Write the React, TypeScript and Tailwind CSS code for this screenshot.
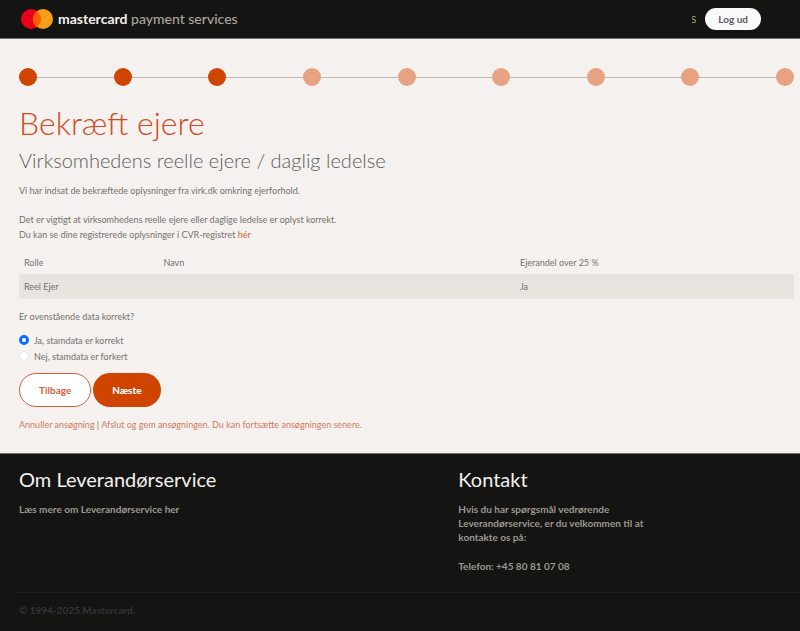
import React, { useState } from 'react';

const steps = [true, true, true, false, false, false, false, false, false];

const owners = [{ role: 'Reel Ejer', name: '', share: 'Ja' }];

const answers = [
  { value: 'yes', label: 'Ja, stamdata er korrekt' },
  { value: 'no', label: 'Nej, stamdata er forkert' },
];

const Logo = () => (
  <svg className="h-5 w-8" viewBox="0 0 32 20" aria-hidden="true">
    <circle cx="10" cy="10" r="10" fill="#eb001b" />
    <circle cx="22" cy="10" r="10" fill="#f79e1b" />
    <path d="M16 2a10 10 0 0 1 0 16a10 10 0 0 1 0-16z" fill="#ff5f00" />
  </svg>
);

const Header = () => (
  <header className="flex h-[39px] items-center justify-between border-b border-[#73726f] bg-[#141413] pl-[21px] pr-[39px]">
    <div className="flex items-center gap-[5px]">
      <Logo />
      <span className="text-[14px] leading-5 font-medium text-[#aaa69d]">
        <span className="font-bold text-[#f3f0ec]">mastercard</span> payment services
      </span>
    </div>
    <div className="flex items-center gap-[9px]">
      <span className="flex w-1 justify-end overflow-hidden text-[10px] text-[#aaa69d]">S</span>
      <button className="h-[22px] rounded-full bg-[#f8f9fa] px-[13px] text-[10px] font-bold text-[#5c5c60]">
        Log ud
      </button>
    </div>
  </header>
);

const Stepper = () => (
  <ol className="flex items-center">
    {steps.map((done, i) => (
      <li key={i} className={i === 0 ? 'flex items-center' : 'flex flex-1 items-center'}>
        {i > 0 && <span className="h-px flex-1 bg-[#bcb8b5]" />}
        <span className={`size-[18px] rounded-full ${done ? 'bg-[#cf4500]' : 'bg-[#e7a281]'}`} />
      </li>
    ))}
  </ol>
);

const OwnersTable = () => (
  <table className="mt-2 w-full table-fixed text-left">
    <thead>
      <tr className="h-6">
        <th className="w-[18%] px-[5px] font-normal">Rolle</th>
        <th className="w-[46%] px-[5px] font-normal">Navn</th>
        <th className="px-[5px] font-normal">Ejerandel over 25 %</th>
      </tr>
    </thead>
    <tbody>
      {owners.map((owner) => (
        <tr key={owner.role} className="h-[25px] bg-[#e8e5e1]">
          <td className="px-[5px]">{owner.role}</td>
          <td className="px-[5px]">{owner.name}</td>
          <td className="px-[5px]">{owner.share}</td>
        </tr>
      ))}
    </tbody>
  </table>
);

const Footer = () => (
  <footer className="flex-1 border-t border-[#73726f] bg-[#141413] pl-3 text-[10px] leading-[14px] font-bold text-[#9c9890]">
    <div className="grid grid-cols-[9fr_7fr] pt-[11px] pb-[19px] pl-[7px]">
      <section>
        <h3 className="text-[20px] leading-7 font-normal text-[#f3f0ee]">Om Leverandørservice</h3>
        <a href="#om" className="mt-[9px] block">Læs mere om Leverandørservice her</a>
      </section>
      <section>
        <h3 className="text-[20px] leading-7 font-normal text-[#f3f0ee]">Kontakt</h3>
        <p className="mt-[9px] max-w-[210px]">
          Hvis du har spørgsmål vedrørende Leverandørservice, er du velkommen til at kontakte os på:
        </p>
        <p className="mt-[15px]">Telefon: +45 80 81 07 08</p>
      </section>
    </div>
    <div className="border-t border-[#1c1d1f] pt-[10px] pb-3 pl-[7px] text-[#323435]">
      © 1994-2025 Mastercard.
    </div>
  </footer>
);

const App = () => {
  const [answer, setAnswer] = useState('yes');

  return (
    <div className="flex min-h-screen flex-col bg-[#f5f1ee] font-[Lato,'Open_Sans',sans-serif]">
      <Header />
      <main className="pt-[29px] pr-[6px] pb-[21px] pl-[19px] text-[9px] leading-[15px] text-[#757270]">
        <Stepper />
        <h1 className="mt-[18px] text-[32px] leading-[38px] font-light text-[#d14a24]">Bekræft ejere</h1>
        <h2 className="mt-[6px] text-[20px] leading-6 font-light text-[#5d5d5d]">
          Virksomhedens reelle ejere / daglig ledelse
        </h2>
        <p className="mt-[11px]">Vi har indsat de bekræftede oplysninger fra virk.dk omkring ejerforhold.</p>
        <p className="mt-[14px]">
          Det er vigtigt at virksomhedens reelle ejere eller daglige ledelse er oplyst korrekt.
          <br />
          Du kan se dine registrerede oplysninger i CVR-registret{' '}
          <a href="#cvr" className="text-[#d2603f]">hér</a>
        </p>
        <OwnersTable />

        <fieldset className="mt-[10px]">
          <legend>Er ovenstående data korrekt?</legend>
          <div className="mt-2 flex flex-col items-start">
            {answers.map(({ value, label }) => (
              <label key={value} className="flex h-4 items-center gap-[5px]">
                <input
                  type="radio"
                  name="answer"
                  value={value}
                  checked={answer === value}
                  onChange={() => setAnswer(value)}
                  className="size-[10px] appearance-none rounded-full border border-[#e8e6e4] bg-white checked:border-[3px] checked:border-[#0d6efd]"
                />
                {label}
              </label>
            ))}
          </div>
        </fieldset>

        <div className="mt-[9px] flex gap-[2px] text-[10px]">
          <button className="h-[34px] rounded-full border border-[#d2603f] bg-white px-[19px] font-bold text-[#d2603f]">
            Tilbage
          </button>
          <button className="h-[34px] rounded-full bg-[#cf4500] px-[19px] font-black text-white">Næste</button>
        </div>
        <p className="mt-[10px]">
          <a href="#annuller" className="text-[#d27b60]">Annuller ansøgning</a> |{' '}
          <a href="#gem" className="text-[#d27b60]">Afslut og gem ansøgningen. Du kan fortsætte ansøgningen senere.</a>
        </p>
      </main>
      <Footer />
    </div>
  );
};

export default App;
